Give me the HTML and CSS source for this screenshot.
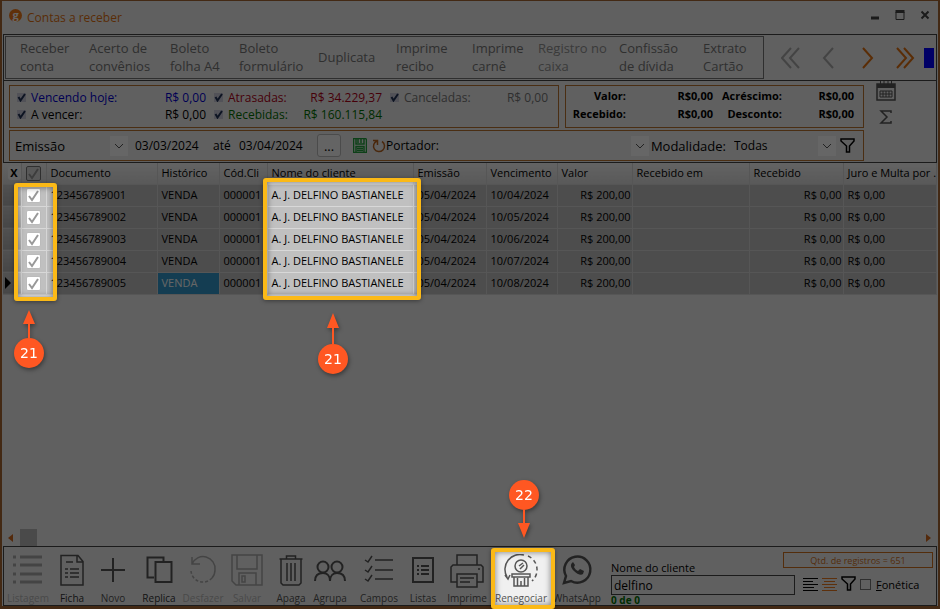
FILE: index.html
```html
<!DOCTYPE html>
<html lang="pt-BR">
<head>
    <meta charset="UTF-8">
    <meta name="viewport" content="width=device-width, initial-scale=1.0">
    <title>Contas a receber</title>
    <link rel="stylesheet" href="styles.css">
</head>
<body>
    <div class="window">
        <header class="titlebar">
            <span class="logo">g</span>
            <h1>Contas a receber</h1>
            <div class="window-buttons">
                <button aria-label="Minimizar"><svg width="10" height="12"><path d="M1 9h8" stroke="#444" stroke-width="3"/></svg></button>
                <button aria-label="Maximizar"><svg width="10" height="12"><path d="M1 3h8v7.500h-8z" fill="none" stroke="#444"/><path d="M.5 2.500h9" stroke="#444" stroke-width="3"/></svg></button>
                <button aria-label="Fechar"><svg width="10" height="12"><path d="M1.500 2.500l7 7M8.500 2.500l-7 7" stroke="#444" stroke-width="2"/></svg></button>
            </div>
        </header>

        <section class="panel">
            <div class="actions">
                <nav class="action-buttons">
                    <button>Receber<br>conta</button>
                    <button>Acerto de<br>convênios</button>
                    <button>Boleto<br>folha A4</button>
                    <button>Boleto<br>formulário</button>
                    <button>Duplicata</button>
                    <button>Imprime<br>recibo</button>
                    <button>Imprime<br>carnê</button>
                    <button class="off">Registro no<br>caixa</button>
                    <button>Confissão<br>de dívida</button>
                    <button>Extrato<br>Cartão</button>
                </nav>
                <div class="pager">
                    <button class="off" aria-label="Primeiro"><svg width="20" height="22"><path d="M10 1L1 11l9 10M18 1L9 11l9 10"/></svg></button>
                    <button class="off" aria-label="Anterior"><svg width="20" height="22"><path d="M14 1L5 11l9 10"/></svg></button>
                    <button aria-label="Próximo"><svg width="20" height="22"><path d="M6 1l9 10-9 10"/></svg></button>
                    <button aria-label="Último"><svg width="20" height="22"><path d="M2 1l9 10-9 10M9 1l9 10-9 10"/></svg></button>
                    <span class="blue-mark"></span>
                </div>
            </div>

            <div class="filters">
                <div class="filter-main">
                    <div class="totals">
                        <div class="box status">
                            <label class="blue"><input type="checkbox" class="tick" checked>Vencendo hoje:</label>
                            <span class="blue">R$ 0,00</span>
                            <label class="red"><input type="checkbox" class="tick" checked>Atrasadas:</label>
                            <span class="red">R$ 34.229,37</span>
                            <label class="gray"><input type="checkbox" class="tick" checked>Canceladas:</label>
                            <span class="gray">R$ 0,00</span>
                            <label><input type="checkbox" class="tick" checked>A vencer:</label>
                            <span>R$ 0,00</span>
                            <label class="green"><input type="checkbox" class="tick" checked>Recebidas:</label>
                            <span class="green">R$ 160.115,84</span>
                        </div>
                        <div class="box sums">
                            <span>Valor:</span><span>R$0,00</span>
                            <span>Acréscimo:</span><span>R$0,00</span>
                            <span>Recebido:</span><span>R$0,00</span>
                            <span>Desconto:</span><span>R$0,00</span>
                        </div>
                    </div>
                    <div class="box search-line">
                        <div class="select period">
                            <select aria-label="Tipo de data"><option>Emissão</option></select>
                            <svg width="18" height="20"><path d="M5 8l4 4 4-4"/></svg>
                        </div>
                        <input class="date" type="text" value="03/03/2024" aria-label="Data inicial">
                        <span class="until">até</span>
                        <input class="date" type="text" value="03/04/2024" aria-label="Data final">
                        <button class="dots">...</button>
                        <button class="save" aria-label="Salvar filtro"><svg width="14" height="15" fill="none" stroke="#22a03c"><path d="M.5.500h12l1 1v13h-13zM3 1v5h8V1M5 1v4M8 1v4M3 14V8.500h8V14M4 10.500h6M4 12.500h6" stroke-width="1.500"/></svg></button>
                        <button class="reload" aria-label="Atualizar"><svg width="14" height="14" fill="none" stroke="#b86420" stroke-width="1.500"><path d="M1 1.500h4.500v4.500M10 2.500a5.500 5.500 0 1 1-5-.5"/></svg></button>
                        <label for="portador">Portador:</label>
                        <div class="select holder">
                            <select id="portador"><option></option></select>
                            <svg width="18" height="20"><path d="M5 8l4 4 4-4"/></svg>
                        </div>
                        <label for="modalidade">Modalidade:</label>
                        <div class="select mode">
                            <select id="modalidade"><option>Todas</option></select>
                            <svg width="18" height="20"><path d="M5 8l4 4 4-4"/></svg>
                        </div>
                        <button class="funnel" aria-label="Filtrar"><svg width="16" height="16" fill="none" stroke="#000" stroke-width="1.500"><path d="M1 1h13v2L9.500 8v6h-3V8L1 3z"/></svg></button>
                    </div>
                </div>
                <div class="side-icons">
                    <button aria-label="Calendário"><svg width="20" height="20" fill="none" stroke="#555"><path d="M1 3h18v16H1z" stroke-width="1.500"/><path d="M1 5h18" stroke-width="4"/><path d="M4.500 0v4M8 0v4M12 0v4M15.500 0v4"/><path d="M4 10h12v6H4zM7 10v6M10 10v6M13 10v6M4 13h12"/></svg></button>
                    <button aria-label="Somar"><svg width="14" height="14" fill="none" stroke="#555" stroke-width="1.500"><path d="M12 3V1H2l6 6-6 6h10v-2"/></svg></button>
                </div>
            </div>
        </section>

        <main class="grid-area">
            <table>
                <colgroup>
                    <col class="c-mark"><col class="c-check"><col class="c-doc"><col class="c-hist"><col class="c-code"><col class="c-name">
                    <col class="c-issue"><col class="c-due"><col class="c-value"><col class="c-paidon"><col class="c-paid"><col>
                </colgroup>
                <thead>
                    <tr>
                        <th class="clear-cell"><button class="clear">X</button></th>
                        <th class="center"><input type="checkbox" class="check head" aria-label="Marcar todos" checked></th>
                        <th>Documento</th>
                        <th>Histórico</th>
                        <th>Cód.Cli</th>
                        <th>Nome do cliente</th>
                        <th>Emissão</th>
                        <th>Vencimento</th>
                        <th>Valor</th>
                        <th>Recebido em</th>
                        <th>Recebido</th>
                        <th>Juro e Multa por .</th>
                    </tr>
                </thead>
                <tbody>
                    <tr>
                        <td class="mark"></td>
                        <td class="center"><input type="checkbox" class="check" aria-label="Marcar 123456789001" checked></td>
                        <td>123456789001</td><td>VENDA</td><td>000001</td><td>A. J. DELFINO BASTIANELE</td>
                        <td>05/04/2024</td><td>10/04/2024</td><td class="num">R$ 200,00</td><td></td><td class="num">R$ 0,00</td><td>R$ 0,00</td>
                    </tr>
                    <tr>
                        <td class="mark"></td>
                        <td class="center"><input type="checkbox" class="check" aria-label="Marcar 123456789002" checked></td>
                        <td>123456789002</td><td>VENDA</td><td>000001</td><td>A. J. DELFINO BASTIANELE</td>
                        <td>05/04/2024</td><td>10/05/2024</td><td class="num">R$ 200,00</td><td></td><td class="num">R$ 0,00</td><td>R$ 0,00</td>
                    </tr>
                    <tr>
                        <td class="mark"></td>
                        <td class="center"><input type="checkbox" class="check" aria-label="Marcar 123456789003" checked></td>
                        <td>123456789003</td><td>VENDA</td><td>000001</td><td>A. J. DELFINO BASTIANELE</td>
                        <td>05/04/2024</td><td>10/06/2024</td><td class="num">R$ 200,00</td><td></td><td class="num">R$ 0,00</td><td>R$ 0,00</td>
                    </tr>
                    <tr>
                        <td class="mark"></td>
                        <td class="center"><input type="checkbox" class="check" aria-label="Marcar 123456789004" checked></td>
                        <td>123456789004</td><td>VENDA</td><td>000001</td><td>A. J. DELFINO BASTIANELE</td>
                        <td>05/04/2024</td><td>10/07/2024</td><td class="num">R$ 200,00</td><td></td><td class="num">R$ 0,00</td><td>R$ 0,00</td>
                    </tr>
                    <tr>
                        <td class="mark"><svg width="6" height="12"><path d="M0 0l6 6-6 6z"/></svg></td>
                        <td class="center"><input type="checkbox" class="check" aria-label="Marcar 123456789005" checked></td>
                        <td>123456789005</td><td class="active">VENDA</td><td>000001</td><td>A. J. DELFINO BASTIANELE</td>
                        <td>05/04/2024</td><td>10/08/2024</td><td class="num">R$ 200,00</td><td></td><td class="num">R$ 0,00</td><td>R$ 0,00</td>
                    </tr>
                </tbody>
            </table>
            <div class="scrollbar">
                <svg width="5" height="8"><path d="M5 0v8L0 4z" fill="#d2691e"/></svg>
                <span class="thumb"></span>
                <svg width="5" height="8"><path d="M0 0v8l5-4z" fill="#d2691e"/></svg>
            </div>
        </main>

        <footer class="bottom">
            <div class="tools">
                <button class="off"><svg width="32" height="32"><path d="M1 3h3M1 11h3M1 20h3M1 28h3M8 3h22M8 11h22M8 20h22M8 28h22" stroke-width="3"/></svg>Listagem</button>
                <button class="strong"><svg width="32" height="32"><path d="M5 1.500h17l5 6V31H5zM21 2v6h6M10 8h7M9 15h3M9 19h3M9 23h3M14 15h9M14 19h9M14 23h9" stroke-width="1.500"/></svg>Ficha</button>
                <button><svg width="32" height="32"><path d="M16 4v24M4 16h24" stroke-width="2"/></svg>Novo</button>
                <button class="strong"><svg width="32" height="32"><path d="M11 23.500H4.500v-20h16V7M12.500 8h16v20h-16z" stroke-width="2"/></svg>Replica</button>
                <button class="off"><svg width="32" height="32"><path d="M5 3v7h8M5 10a12 12 0 0 1 23 6 12 12 0 0 1-3 8" stroke-width="1.500"/><path d="M25 24a12 12 0 0 1-21-7" stroke-width="1.500" stroke-dasharray="3 2"/></svg>Desfazer</button>
                <button class="off"><svg width="32" height="32"><path d="M1 1h30v30H5l-4-4zM6 1v14h20V1M8 31V19h17v12M11 22h3v6h-3z" stroke-width="1.500"/></svg>Salvar</button>
                <button><svg width="32" height="32"><path d="M4.500 5h23M6 5v24l2 2h16l2-2V5M11.500 5V2h9v3M12 9v18M16 9v18M20 9v18" stroke-width="1.500"/></svg>Apaga</button>
                <button><svg width="32" height="32"><circle cx="9" cy="13" r="5.500"/><circle cx="23" cy="13" r="5.500"/><path d="M1 27c0-5 3-8 8-8s7 4 7 8c0-5 3-8 7-8 5 0 8 3 8 8" stroke-width="2"/></svg>Agrupa</button>
                <button><svg width="32" height="32"><path d="M2 6l3 2 4-6M2 16l3 2 4-6M2 25l3 2 4-6M12 6h18M12 16h18M12 25h18" stroke-width="1.500"/></svg>Campos</button>
                <button><svg width="32" height="32"><path d="M6 4h20v24H6z" stroke-width="2"/><path d="M10 12h2M10 16h2M10 20h2M14 12h8M14 16h8M14 20h8" stroke-width="2"/></svg>Listas</button>
                <button><svg width="34" height="34"><path d="M7 11V1h20v10M7 28H1V13l2-2h28l2 2v15h-6M7 20h20v13H7zM10 24h14M10 28h10M28 15h2" stroke-width="1.500"/></svg>Imprime</button>
                <button><svg class="thin" width="34" height="34"><circle cx="17" cy="12" r="6"/><path d="M15 12l4-3M16 15l4-4M3 23A15 15 0 0 1 20 1"/><path d="M1 21l3 4 2-4"/><path d="M24 2a15 15 0 0 1 4 25" stroke-dasharray="4 3"/><path d="M8 20h18v3H8zM10 23v9h14v-9M13.500 24v8M17 27v5M20.500 24v8"/></svg>Renegociar</button>
                <button><svg width="32" height="32"><path d="M3 29l2-7A13 13 0 1 1 10 27z" stroke-width="2.500"/><path d="M11 9c-2 2-1 5 2 8s7 5 9 3l1-3-4-2-2 2c-2-1-3-2-4-4l1-2-2-3z" fill="#555" stroke="none"/></svg>WhatsApp</button>
            </div>
            <div class="find">
                <label for="nome">Nome do cliente</label>
                <input type="text" id="nome" value="delfino">
                <span class="found">0 de 0</span>
            </div>
            <div class="find-side">
                <div class="count">Qtd. de registros = 651</div>
                <div class="find-options">
                    <button aria-label="Alinhar"><svg width="15" height="14"><path d="M0 1.500h15M0 4.500h10M0 7.500h15M0 10.500h11M0 13.500h15" stroke="#000"/></svg></button>
                    <button aria-label="Centralizar"><svg width="15" height="14"><path d="M0 1.500h15M2 4.500h11M0 7.500h15M2 10.500h11M0 13.500h15" stroke="#e87820"/></svg></button>
                    <button aria-label="Filtrar"><svg width="15" height="16" fill="none" stroke="#000" stroke-width="1.500"><path d="M1 1h13v2L9.500 8v6h-3V8L1 3z"/></svg></button>
                    <label><input type="checkbox" class="plain"><span><u>F</u>onética</span></label>
                </div>
            </div>
        </footer>
    </div>

    <!-- escurece a tela, menos as áreas destacadas -->
    <svg class="shade" width="100%" height="100%">
        <mask id="holes">
            <rect width="100%" height="100%" fill="#fff"/>
            <rect x="16" y="185" width="38" height="113" fill="#000"/>
            <rect x="266" y="180" width="152" height="117" fill="#000"/>
            <svg y="100%" overflow="visible"><rect x="494" y="-58" width="58" height="58" fill="#000"/></svg>
        </mask>
        <rect width="100%" height="100%" fill="#000" fill-opacity=".6" mask="url(#holes)"/>
    </svg>
    <div class="frame frame-checks"></div>
    <div class="frame frame-names"></div>
    <div class="frame frame-deal"></div>
    <div class="callout callout-checks">
        <svg width="14" height="28"><path d="M7 0l6 14H8v14H6V14H1z"/></svg>
        <span>21</span>
    </div>
    <div class="callout callout-names">
        <svg width="14" height="31"><path d="M7 0l6 15H8v16H6V15H1z"/></svg>
        <span>21</span>
    </div>
    <div class="callout callout-deal">
        <span>22</span>
        <svg width="14" height="28"><path d="M7 28l6-15H8V0H6v13H1z"/></svg>
    </div>
</body>
</html>
```

FILE: styles.css
```css
* {
    box-sizing: border-box;
}
body {
    margin: 0;
    position: relative;
    min-height: 100vh;
    font-family: "Open Sans", "Noto Sans", sans-serif;
    font-size: 12px;
    color: #000;
    background-color: #f0f0f0;
    overflow: hidden;
}
button, input, select {
    font: inherit;
    color: inherit;
    margin: 0;
    padding: 0;
    border: 0;
    background: none;
}
svg {
    display: block;
    flex: none;
}
.window {
    min-height: 100vh;
    display: flex;
    flex-direction: column;
    border: 2px solid #a86832;
    border-top-width: 1px;
    border-bottom-width: 3px;
}

/* barra de título */
.titlebar {
    display: flex;
    align-items: center;
    gap: 5px;
    height: 33px;
    padding: 0 8px 5px 7px;
}
.logo {
    width: 13px;
    height: 13px;
    border-radius: 50%;
    background-color: #f07818;
    color: #fff;
    font-size: 11px;
    font-weight: bold;
    line-height: 11px;
    text-align: center;
}
.titlebar h1 {
    flex: 1;
    margin: 0;
    padding-top: 4px;
    font-size: 12px;
    font-weight: normal;
    color: #e07010;
}
.window-buttons {
    display: flex;
    gap: 15px;
}

/* painel superior */
.panel {
    margin: 0 1px;
    border: 1px solid #444;
}
.actions {
    display: flex;
    height: 46px;
    padding: 1px;
    border-bottom: 1px solid #444;
}
.action-buttons {
    flex: none;
    display: grid;
    grid-template-columns: 69px 81px 69px 79px 78px 76px 66px 81px 84px 45px;
    padding: 0 0 2px 14px;
    width: 759px;
    border: 1px solid #777;
    color: #777;
}
.action-buttons button {
    font-size: 13px;
    line-height: 18px;
    text-align: left;
    white-space: nowrap;
}
.action-buttons .off {
    color: #929292;
}
.pager {
    flex: 1;
    display: flex;
    align-items: center;
    justify-content: flex-end;
    gap: 18px;
    padding-right: 1px;
}
.pager svg {
    fill: none;
    stroke: #e07010;
    stroke-width: 2;
}
.pager .off svg {
    stroke: #aaa;
}
.blue-mark {
    width: 10px;
    height: 20px;
    margin-left: -9px;
    background-color: #0000ff;
}
.filters {
    display: flex;
    padding: 4px 5px 1px;
}
.filter-main {
    flex: none;
    width: 855px;
}
.totals {
    display: flex;
    gap: 6px;
    margin-bottom: 2px;
}
.box {
    border: 1px solid #b87430;
}
.status {
    width: 550px;
    height: 43px;
    padding: 3px 10px 4px 6px;
    display: grid;
    grid-template-columns: 120px 70px 83px 93px 90px 1fr;
    grid-auto-rows: 17px;
    line-height: 17px;
}
.status label {
    display: flex;
    align-items: center;
    gap: 5px;
    padding-left: 1px;
    white-space: nowrap;
}
.status .red, .status .green, .status .gray {
    padding-left: 8px;
}
.status > span {
    text-align: right;
    white-space: nowrap;
}
.tick {
    appearance: none;
    width: 9px;
    height: 9px;
    background: #ccd url("data:image/svg+xml,%3Csvg xmlns='http://www.w3.org/2000/svg' width='9' height='9'%3E%3Cpath d='M1.500 4l2 3.500L8 1' fill='none' stroke='%23235' stroke-width='2'/%3E%3C/svg%3E");
}
.blue { color: #0000d0; }
.red { color: #b00018; }
.green { color: #007000; }
.gray { color: #777; }
.sums {
    flex: 1;
    display: grid;
    grid-template-columns: 60px 87px 69px 1fr;
    grid-auto-rows: 18px;
    padding: 1px 9px 0 0;
    font-size: 11px;
    line-height: 18px;
    font-weight: bold;
    text-align: right;
}
.search-line {
    display: flex;
    align-items: center;
    height: 31px;
    padding: 0 7px 0 5px;
    font-size: 13px;
    line-height: 20px;
}
.select {
    display: flex;
    align-items: center;
}
.select select {
    appearance: none;
    flex: 1;
    min-width: 0;
}
.select svg {
    background-color: #fff;
    fill: none;
    stroke: #555;
}
.period {
    width: 113px;
}
.date {
    width: 70px;
    margin-left: 7px;
    font-size: 12px;
}
.until {
    width: 20px;
    margin: 0 0 0 8px;
    font-size: 12px;
}
.until + .date {
    margin-left: 6px;
}
.dots {
    width: 24px;
    height: 23px;
    margin: 0 12px 0 8px;
    border: 1px solid #bbb;
    border-radius: 3px;
    background-color: #fafafa;
}
.reload {
    margin-left: 5px;
}
.holder {
    flex: 1;
}
.search-line label {
    font-size: 12px;
}
.mode {
    width: 110px;
    margin-right: 4px;
    padding-left: 8px;
    font-size: 12px;
}
.holder + label {
    margin-left: 2px;
    font-size: 13px;
}
.side-icons {
    display: flex;
    flex-direction: column;
    align-items: center;
    gap: 9px;
    margin-top: -4px;
    padding-left: 12px;
}

/* tabela */
.grid-area {
    flex: 1;
    display: flex;
    flex-direction: column;
    justify-content: space-between;
    margin: 0 1px;
    overflow: hidden;
}
table {
    width: 100%;
    table-layout: fixed;
    border-collapse: collapse;
}
.c-mark { width: 18px; }
.c-check { width: 25px; }
.c-doc { width: 111px; }
.c-hist { width: 62px; }
.c-code { width: 48px; }
.c-name { width: 146px; }
.c-issue { width: 73px; }
.c-due { width: 71px; }
.c-value { width: 75px; }
.c-paidon { width: 117px; }
.c-paid { width: 94px; }
th, td {
    height: 22px;
    padding: 0 2px 0 4px;
    border: 1px solid #d8d8d8;
    border-top: 0;
    border-left: 0;
    overflow: hidden;
    font-size: 11px;
    font-weight: normal;
    line-height: 20px;
    text-align: left;
    white-space: nowrap;
}
th {
    height: 21px;
    background: linear-gradient(#f8f8f8, #dedede);
}
td {
    background-color: #c0c0c0;
}
.num {
    padding-right: 1px;
    text-align: right;
}
.center {
    padding: 0;
    text-align: center;
}
.mark {
    padding: 0 0 0 2px;
    background: linear-gradient(#cacaca, #b0b0b0);
}
.active {
    background-color: #3399cc;
    color: #fff;
}
.clear-cell {
    padding: 0;
    text-align: right;
}
.clear {
    width: 13px;
    font-size: 11px;
    font-weight: bold;
    line-height: 14px;
    border-radius: 3px;
    background-color: #fafafa;
}
.check {
    display: block;
    appearance: none;
    width: 15px;
    height: 15px;
    margin: 0 auto;
    border: 1px solid #bbb;
    border-radius: 2px;
    background: #fff url("data:image/svg+xml,%3Csvg xmlns='http://www.w3.org/2000/svg' width='13' height='13'%3E%3Cpath d='M2 7l3 4 6-9' fill='none' stroke='%23999' stroke-width='2'/%3E%3C/svg%3E");
}
.check.head {
    border-color: #777;
    background-color: #ddd;
}
.scrollbar {
    display: flex;
    align-items: center;
    gap: 7px;
    height: 17px;
    padding: 0 6px 0 5px;
}
.thumb {
    width: 17px;
    height: 17px;
    margin-right: auto;
    background-color: #b8b8b8;
}

/* barra inferior */
.bottom {
    display: flex;
    height: 60px;
    margin: 0 1px;
    border: 1px solid #444;
}
.tools {
    flex: none;
    display: grid;
    grid-template-columns: 48px 40px 42px 50px 38px 50px 38px 40px 58px 30px 58px 50px 62px;
}
.tools button {
    display: flex;
    flex-direction: column;
    align-items: center;
    justify-content: space-between;
    min-width: 0;
    padding: 7px 0 0;
    font-size: 10px;
    line-height: 14px;
    white-space: nowrap;
    color: #555;
}
.tools svg {
    margin: 0 -4px;
    fill: none;
    stroke: #555;
    stroke-width: 1.5;
}
.tools circle {
    stroke-width: 2;
}
.tools .thin, .tools .thin circle {
    stroke-width: 1.5;
}
.tools .strong {
    color: #333;
}
.tools .off {
    color: #b8b8b8;
}
.tools .off svg {
    stroke: #aaa;
}
.find {
    flex: none;
    width: 184px;
    margin-left: 3px;
    padding-top: 14px;
    display: flex;
    flex-direction: column;
    font-size: 11px;
    line-height: 14px;
}
.find input {
    height: 21px;
    padding: 0 2px;
    border: 1px solid #444;
    font-size: 12px;
}
.found {
    font-size: 10px;
    font-weight: bold;
    line-height: 10px;
    color: #007000;
}
.find-side {
    flex: 1;
    min-width: 0;
    display: flex;
    flex-direction: column;
    align-items: flex-end;
    padding: 5px 3px 0 8px;
}
.count {
    width: 150px;
    height: 16px;
    margin-left: -20px;
    border: 1px solid #d07020;
    font-size: 9px;
    line-height: 15px;
    text-align: center;
    color: #d07020;
}
.find-options {
    display: flex;
    align-items: center;
    align-self: flex-start;
    gap: 4px;
    margin-top: 8px;
    font-size: 11px;
}
.find-options label {
    display: flex;
    align-items: center;
    gap: 5px;
}
.plain {
    appearance: none;
    width: 11px;
    height: 11px;
    border: 1px solid #777;
}

/* destaques */
.shade {
    position: absolute;
    inset: 0;
    pointer-events: none;
}
.frame {
    position: absolute;
    border: 4px solid #fbb917;
    border-radius: 3px;
    box-shadow: 0 1px 4px rgba(0, 0, 0, 0.4), inset 0 0 6px rgba(0, 0, 0, 0.5);
    pointer-events: none;
}
.frame-checks {
    left: 14px;
    top: 183px;
    width: 43px;
    height: 118px;
}
.frame-names {
    left: 263px;
    top: 178px;
    width: 158px;
    height: 122px;
}
.frame-deal {
    left: 491px;
    bottom: 0;
    width: 64px;
    height: 61px;
}
.callout {
    position: absolute;
    display: flex;
    flex-direction: column;
    align-items: center;
    width: 30px;
    filter: drop-shadow(1px 2px 2px rgba(0, 0, 0, 0.4));
    pointer-events: none;
}
.callout svg {
    fill: #ff5722;
}
.callout span {
    width: 30px;
    height: 30px;
    border-radius: 50%;
    background-color: #ff5722;
    color: #fff;
    font-family: "DejaVu Sans", sans-serif;
    font-size: 14px;
    line-height: 30px;
    text-align: center;
}
.callout-checks {
    left: 14px;
    top: 310px;
}
.callout-names {
    left: 318px;
    top: 313px;
}
.callout-deal {
    left: 509px;
    bottom: 71px;
}
```
